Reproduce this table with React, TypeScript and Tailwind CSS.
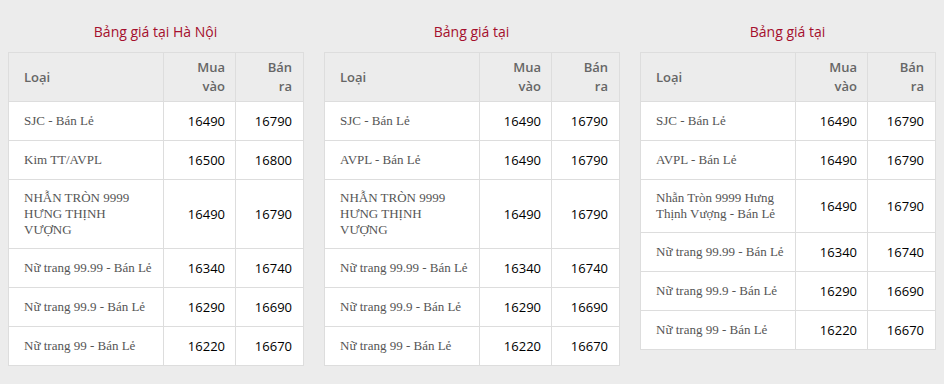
import React from "react";

type Row = { name: string; buy: string; sell: string };

const tables: { title: string; rows: Row[] }[] = [
  {
    title: "Bảng giá tại Hà Nội",
    rows: [
      { name: "SJC - Bán Lẻ", buy: "16490", sell: "16790" },
      { name: "Kim TT/AVPL", buy: "16500", sell: "16800" },
      { name: "NHẪN TRÒN 9999 HƯNG THỊNH VƯỢNG", buy: "16490", sell: "16790" },
      { name: "Nữ trang 99.99 - Bán Lẻ", buy: "16340", sell: "16740" },
      { name: "Nữ trang 99.9 - Bán Lẻ", buy: "16290", sell: "16690" },
      { name: "Nữ trang 99 - Bán Lẻ", buy: "16220", sell: "16670" },
    ],
  },
  {
    title: "Bảng giá tại",
    rows: [
      { name: "SJC - Bán Lẻ", buy: "16490", sell: "16790" },
      { name: "AVPL - Bán Lẻ", buy: "16490", sell: "16790" },
      { name: "NHẪN TRÒN 9999 HƯNG THỊNH VƯỢNG", buy: "16490", sell: "16790" },
      { name: "Nữ trang 99.99 - Bán Lẻ", buy: "16340", sell: "16740" },
      { name: "Nữ trang 99.9 - Bán Lẻ", buy: "16290", sell: "16690" },
      { name: "Nữ trang 99 - Bán Lẻ", buy: "16220", sell: "16670" },
    ],
  },
  {
    title: "Bảng giá tại",
    rows: [
      { name: "SJC - Bán Lẻ", buy: "16490", sell: "16790" },
      { name: "AVPL - Bán Lẻ", buy: "16490", sell: "16790" },
      { name: "Nhẫn Tròn 9999 Hưng Thịnh Vượng - Bán Lẻ", buy: "16490", sell: "16790" },
      { name: "Nữ trang 99.99 - Bán Lẻ", buy: "16340", sell: "16740" },
      { name: "Nữ trang 99.9 - Bán Lẻ", buy: "16290", sell: "16690" },
      { name: "Nữ trang 99 - Bán Lẻ", buy: "16220", sell: "16670" },
    ],
  },
];

function PriceTable({ title, rows }: { title: string; rows: Row[] }) {
  return (
    <div className="w-[295px] flex flex-col shrink-0">
      <div className="h-[52px] shrink-0 pt-[22px] text-center text-[14px] leading-[20px] font-normal text-[#a50f2d] font-['Open_Sans',sans-serif]">
        {title}
      </div>
      <table className="w-[295px] table-fixed border-collapse border border-[#dddddd]">
        <colgroup>
          <col className="w-[155px]" />
          <col className="w-[72px]" />
          <col className="w-[68px]" />
        </colgroup>
        <thead>
          <tr className="h-[49px] font-['Open_Sans',sans-serif] text-[13px] font-semibold text-[#666666] leading-[19px]">
            <th className="border border-[#dddddd] text-left pl-[15px] pr-[10px] py-[5px] font-semibold">Loại</th>
            <th className="border border-[#dddddd] text-right pl-[10px] pr-[10px] py-[5px] font-semibold">
              Mua
              <br />
              vào
            </th>
            <th className="border border-[#dddddd] text-right pl-[10px] pr-[11px] py-[5px] font-semibold">
              Bán
              <br />
              ra
            </th>
          </tr>
        </thead>
        <tbody className="bg-white">
          {rows.map((r, i) => (
            <tr key={i}>
              <td className="border border-[#dddddd] pl-[15px] pr-[10px] py-[10px] font-['Liberation_Serif',serif] text-[13px] leading-[16px] text-[#555555]">
                {r.name}
              </td>
              <td className="border border-[#dddddd] pr-[10px] py-[10px] text-right font-['Open_Sans',sans-serif] text-[13px] font-medium leading-[18px] text-[#000000]">
                {r.buy}
              </td>
              <td className="border border-[#dddddd] pr-[11px] py-[10px] text-right font-['Open_Sans',sans-serif] text-[13px] font-medium leading-[18px] text-[#000000]">
                {r.sell}
              </td>
            </tr>
          ))}
        </tbody>
      </table>
    </div>
  );
}

export default function App() {
  return (
    <div className="w-[944px] h-[384px] bg-[#ececec] flex items-start gap-[21px] px-[8px]">
      {tables.map((t, i) => (
        <PriceTable key={i} title={t.title} rows={t.rows} />
      ))}
    </div>
  );
}
